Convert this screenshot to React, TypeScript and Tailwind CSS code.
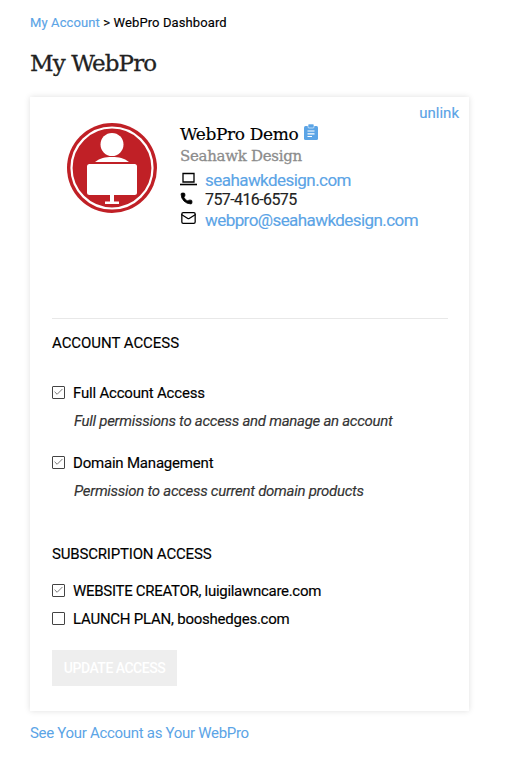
import { Check, Mail, Phone } from 'lucide-react'

const sans = "font-['Roboto',sans-serif]"
const serif = "font-['DejaVu_Serif',serif]"

function Logo() {
    return (
        <svg width="90" height="90" viewBox="0 0 90 90" className="shrink-0">
            <circle cx="45" cy="45" r="45" fill="#c02026" />
            <circle cx="45" cy="45" r="40.5" fill="none" stroke="#fff" strokeWidth="2.2" />
            <circle cx="45" cy="21.500" r="11.5" fill="#fff" />
            <path d="M28 39 C33 35 38 34 45 34 C52 34 57 35 62 39 Z" fill="#fff" />
            <rect x="20" y="41" width="50" height="31" rx="2.500" fill="#fff" />
            <rect x="43" y="72" width="4" height="7" fill="#fff" />
            <rect x="38" y="78.500" width="14" height="2.500" fill="#fff" />
        </svg>
    )
}

function Box({ checked }: { checked: boolean }) {
    return (
        <span className="mb-[2px] flex h-[13px] w-[13px] shrink-0 items-center justify-center rounded-[1px] border border-[#444] bg-white">
            {checked && <Check size={12} strokeWidth={1.6} className="text-[#444]" />}
        </span>
    )
}

export default function App() {
    return (
        <div className={`min-h-[759px] w-[506px] bg-white px-[30px] pt-[14px] text-black ${sans}`}>
            <p className="h-[17px] text-[13px] leading-[17px] tracking-[0.11px] [-webkit-text-stroke:0.15px]">
                <a className="text-[#5ba4e6]">My Account</a> &gt; WebPro Dashboard
            </p>
            <h1 className={`mt-[16px] text-[23px] leading-[32px] tracking-[-0.9px] text-[#222] [-webkit-text-stroke:0.3px_#222] ${serif}`}>My WebPro</h1>

            <div className="relative mt-[18px] h-[614px] w-[439px] bg-white pl-[22px] pr-[21px] pt-[26px] shadow-[0_0_6px_rgba(0,0,0,0.13)] [-webkit-text-stroke:0.15px]">
                <a className="absolute right-[10px] top-[7px] text-[15px] leading-[18px] text-[#5ba4e6]">unlink</a>

                <div className="flex h-[196px] border-b border-[#e8e8e8] pl-[15px]">
                    <Logo />
                    <div className="ml-[23px] flex flex-col">
                        <div className="flex h-[22px] items-center">
                            <span className={`text-[17px] leading-[22px] tracking-[-0.35px] ${serif}`}>WebPro Demo</span>
                            <svg width="14" height="16" viewBox="0 0 14 16" className="ml-[6px] mb-[4px]">
                                <rect x="0" y="2" width="14" height="14" rx="1.500" fill="#5ba4e6" />
                                <rect x="4" y="0" width="6" height="4" rx="1" fill="#5ba4e6" stroke="#fff" strokeWidth="0.6" />
                                <path d="M3.500 7H10.500M3.500 9.800H10.500M3.500 12.500H8" stroke="#fff" strokeWidth="1.200" />
                            </svg>
                        </div>
                        <span className={`mt-[1px] text-[15px] leading-[20px] tracking-[-0.3px] text-[#8c8c8c] [-webkit-text-stroke:0.3px_#8c8c8c] ${serif}`}>Seahawk Design</span>
                        <div className="mt-[4px] flex h-[20px] items-center">
                            <svg width="17" height="14" viewBox="0 0 17 14" className="mb-[3px]">
                                <path d="M3 1.500H14V10H3Z" fill="none" stroke="#000" strokeWidth="1.300" />
                                <path d="M0 12.500H17" stroke="#000" strokeWidth="1.600" />
                            </svg>
                            <a className="ml-[8px] text-[17px] leading-[20px] tracking-[-0.55px] text-[#5ba4e6]">seahawkdesign.com</a>
                        </div>
                        <div className="flex h-[20px] items-center">
                            <Phone size={13} fill="#000" strokeWidth={1.5} className="mb-[3px] w-[17px] pr-[4px]" />
                            <span className="ml-[8px] text-[16px] leading-[20px] tracking-[-0.6px] text-[#222]">757-416-6575</span>
                        </div>
                        <div className="flex h-[20px] items-center">
                            <Mail size={16} strokeWidth={1.9} className="mb-[4px] w-[17px]" />
                            <a className="ml-[8px] text-[17px] leading-[20px] tracking-[-0.57px] text-[#5ba4e6]">webpro@seahawkdesign.com</a>
                        </div>
                    </div>
                </div>

                <h2 className="mt-[15px] text-[15px] leading-[18px] tracking-[-0.05px]">ACCOUNT ACCESS</h2>

                <label className="mt-[32px] flex items-center gap-[8px] text-[15px] leading-[18px]">
                    <Box checked />
                    <span className="tracking-[-0.2px]">Full Account Access</span>
                </label>
                <p className="mt-[10px] pl-[22px] text-[15px] italic leading-[18px] tracking-[-0.28px] text-[#333]">
                    Full permissions to access and manage an account
                </p>

                <label className="mt-[24px] flex items-center gap-[8px] text-[15px] leading-[18px]">
                    <Box checked />
                    <span className="tracking-[-0.2px]">Domain Management</span>
                </label>
                <p className="mt-[10px] pl-[22px] text-[15px] italic leading-[18px] tracking-[-0.28px] text-[#333]">
                    Permission to access current domain products
                </p>

                <h2 className="mt-[45px] text-[15px] leading-[18px] tracking-[-0.18px]">SUBSCRIPTION ACCESS</h2>

                <label className="mt-[19px] flex items-center gap-[8px] text-[15px] leading-[18px]">
                    <Box checked />
                    <span className="tracking-[-0.29px]">WEBSITE CREATOR, luigilawncare.com</span>
                </label>
                <label className="mt-[10px] flex items-center gap-[8px] text-[15px] leading-[18px]">
                    <Box checked={false} />
                    <span className="tracking-[-0.24px]">LAUNCH PLAN, booshedges.com</span>
                </label>

                <button className="mt-[22px] h-[36px] w-[125px] bg-[#eeeeee] text-[14px] font-medium tracking-[-0.5px] text-white [-webkit-text-stroke:0]">
                    UPDATE ACCESS
                </button>
            </div>

            <a className="mt-[13px] block text-[15px] leading-[18px] tracking-[-0.3px] text-[#5ba4e6]">See Your Account as Your WebPro</a>
        </div>
    )
}
